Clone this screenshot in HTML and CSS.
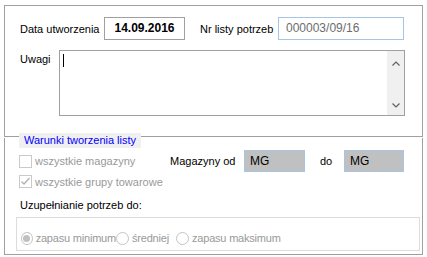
FILE: index.html
```html
<!DOCTYPE html>
<html lang="pl">
<head>
  <meta charset="UTF-8">
  <link rel="stylesheet" href="styles.css">
  <title>Lista potrzeb</title>
</head>
<body>
  <div class="topPanel">
    <div class="row rowHead">
      <span class="lbl lblDate">Data utworzenia</span>
      <div class="dateBox">14.09.2016</div>
      <span class="lbl lblNr">Nr listy potrzeb</span>
      <div class="nrBox">000003/09/16</div>
    </div>
    <div class="row rowNotes">
      <span class="lbl lblNotes">Uwagi</span>
      <div class="notes">
        <span class="caret"></span>
        <div class="scroll">
          <svg width="8" height="5" viewBox="0 0 8 5"><polyline points="0.5,4.5 4,1 7.5,4.5" fill="none" stroke="#606060" stroke-width="1.2"/></svg>
          <svg width="8" height="5" viewBox="0 0 8 5"><polyline points="0.5,0.5 4,4 7.5,0.5" fill="none" stroke="#606060" stroke-width="1.2"/></svg>
        </div>
      </div>
    </div>
  </div>

  <div class="group">
    <span class="legend">Warunki tworzenia listy</span>
    <div class="row rowStores">
      <label class="chk chkStores"><span class="box"></span>wszystkie magazyny</label>
      <span class="lbl lblFrom">Magazyny od</span>
      <div class="mgBox mgFrom">MG</div>
      <span class="lbl lblTo">do</span>
      <div class="mgBox mgTo">MG</div>
    </div>
    <div class="row rowGroups">
      <label class="chk"><span class="box"><svg width="11" height="11" viewBox="0 0 11 11"><polyline points="1.5,5.5 4,8 9.5,2" fill="none" stroke="#b0b0b0" stroke-width="1.3"/></svg></span>wszystkie grupy towarowe</label>
    </div>
    <div class="row rowFill">Uzupełnianie potrzeb do:</div>
    <div class="radios">
      <label class="radio r1"><span class="dot on"></span>zapasu minimum</label>
      <label class="radio r2"><span class="dot"></span>średniej</label>
      <label class="radio r3"><span class="dot"></span>zapasu maksimum</label>
    </div>
  </div>
</body>
</html>
```

FILE: styles.css
```css
*{box-sizing: border-box;}
body
{
  margin: 0;
  background-color: #fff;
  font-family: "Liberation Sans", Arial, sans-serif;
  font-size: 11px;
  color: #000;
}
.row
{
  display: flex;
  align-items: center;
}
.topPanel
{
  margin: 5px 4px 0;
  height: 132px;
  padding: 11px 0 0 15px;
  border: 1px solid #a0a0a0;
}
.rowHead
{
  height: 23px;
}
.lblDate { width: 84px; }
.dateBox
{
  width: 81px;
  height: 23px;
  line-height: 21px;
  text-align: center;
  font-weight: bold;
  font-size: 12px;
  border: 1px solid #a0a0a0;
}
.lblNr
{
  margin-left: 15px;
  width: 78px;
}
.nrBox
{
  width: 126px;
  height: 23px;
  line-height: 21px;
  padding-left: 7px;
  color: #6d6d6d;
  font-size: 12px;
  border: 1px solid #a6c4e4;
}
.rowNotes
{
  margin-top: 10px;
  align-items: flex-start;
}
.lblNotes
{
  width: 39px;
  padding-top: 3px;
}
.notes
{
  display: flex;
  justify-content: space-between;
  width: 346px;
  height: 66px;
  padding-left: 3px;
  border: 1px solid #a0a0a0;
}
.caret
{
  width: 1px;
  height: 13px;
  margin-top: 3px;
  background-color: #000;
}
.scroll
{
  display: flex;
  flex-direction: column;
  justify-content: space-between;
  align-items: center;
  width: 17px;
  padding: 10px 0 7px;
  background-color: #f0f0f0;
}
.group
{
  position: relative;
  margin: 1px 4px 0;
  height: 117px;
  padding: 12px 0 0 14px;
  border: 1px solid #a0a0a0;
  border-top: none;
}
.legend
{
  position: absolute;
  top: -5px;
  left: 14px;
  padding: 1px 5px 2px;
  color: #0000ff;
  background-color: #f0f0f0;
}
.rowStores
{
  height: 22px;
}
.chk
{
  display: flex;
  align-items: center;
  white-space: nowrap;
  color: #999;
}
.chkStores { width: 151px; }
.box
{
  display: grid;
  place-content: center;
  width: 13px;
  height: 13px;
  margin-right: 3px;
  border: 1px solid #cacaca;
  background-color: #fff;
}
.lblFrom { width: 74px; }
.mgBox
{
  height: 22px;
  line-height: 20px;
  padding-left: 5px;
  font-size: 12px;
  background-color: #c0c0c0;
  border: 1px solid #a6c4e4;
}
.mgFrom { width: 61px; }
.lblTo
{
  margin-left: 15px;
  width: 24px;
}
.mgTo { width: 60px; }
.rowGroups
{
  height: 13px;
  margin-top: 3px;
}
.rowFill
{
  height: 14px;
  margin: 10px 0 0 1px;
}
.radios
{
  display: flex;
  align-items: center;
  height: 34px;
  margin: 5px 2px 0 -3px;
  padding: 8px 0 0 4px;
  border: 1px solid #dcdcdc;
  color: #999;
}
.radio
{
  display: flex;
  align-items: center;
  flex-shrink: 0;
  white-space: nowrap;
  letter-spacing: -0.2px;
}
.r1 { width: 95px; }
.r2 { width: 60px; }
.dot
{
  display: grid;
  place-content: center;
  width: 13px;
  height: 13px;
  margin-right: 3px;
  border: 1px solid #c4c4c4;
  border-radius: 50%;
  background-color: #fff;
}
.dot.on::after
{
  content: "";
  width: 7px;
  height: 7px;
  border-radius: 50%;
  background-color: #c0c0c0;
}
```
